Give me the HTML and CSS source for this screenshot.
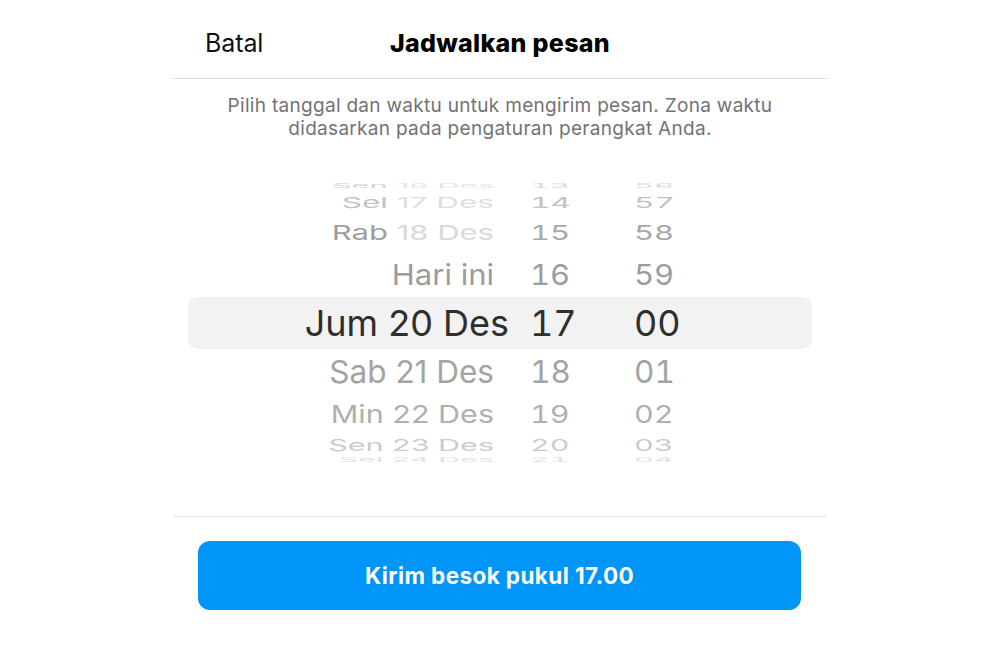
FILE: index.html
```html
<!DOCTYPE html>
<html lang="id">
<head>
<meta charset="utf-8">
<title>Jadwalkan pesan</title>
<link rel="stylesheet" href="styles.css">
</head>
<body>
<div class="sheet">
  <header class="header">
    <span class="cancel">Batal</span>
    <h1 class="title">Jadwalkan pesan</h1>
    <span></span>
  </header>
  <p class="desc">Pilih tanggal dan waktu untuk mengirim pesan. Zona waktu<br>didasarkan pada pengaturan perangkat Anda.</p>
  <div class="picker">
    <div class="row r4"><span class="d"><span class="dd">Sen</span> <span class="df">16 Des</span></span><span class="h">13</span><span class="m">56</span></div>
    <div class="row r3"><span class="d"><span class="dd">Sel</span> <span class="df">17 Des</span></span><span class="h">14</span><span class="m">57</span></div>
    <div class="row r2"><span class="d"><span class="dd">Rab</span> <span class="df">18 Des</span></span><span class="h">15</span><span class="m">58</span></div>
    <div class="row r1"><span class="d">Hari ini</span><span class="h">16</span><span class="m">59</span></div>
    <div class="row sel"><span class="d">Jum 20 Des</span><span class="h">17</span><span class="m">00</span></div>
    <div class="row b1"><span class="d">Sab 21 Des</span><span class="h">18</span><span class="m">01</span></div>
    <div class="row b2"><span class="d">Min 22 Des</span><span class="h">19</span><span class="m">02</span></div>
    <div class="row b3"><span class="d">Sen 23 Des</span><span class="h">20</span><span class="m">03</span></div>
    <div class="row b4"><span class="d">Sel 24 Des</span><span class="h">21</span><span class="m">04</span></div>
  </div>
  <div class="footer">
    <button class="send">Kirim besok pukul 17.00</button>
  </div>
</div>
</body>
</html>
```
FILE: styles.css
```css
* { box-sizing: border-box; }
html, body { margin: 0; padding: 0; background: #fff; }
body { font-family: Inter, "Noto Sans", sans-serif; color: #000; }

.sheet { width: 654px; margin: 0 auto; }

.header {
  height: 79px;
  display: grid;
  grid-template-columns: 1fr auto 1fr;
  align-items: center;
  padding: 0 32px;
  border-bottom: 1px solid #dcdcdc;
}
.cancel { font-size: 25px; color: #111; padding-top: 8px; letter-spacing: -0.1px; }
.title { margin: 0; font-size: 25px; font-weight: 800; padding-top: 8px; letter-spacing: 0.3px; }

.desc {
  margin: 15px 0 0;
  text-align: center;
  font-size: 19px;
  line-height: 23px;
  letter-spacing: 0.3px;
  color: #737373;
}

.picker {
  margin-top: 40px;
  height: 288px;
}

.row {
  display: grid;
  grid-template-columns: 357px 104px 1fr;
  grid-template-rows: minmax(0, 1fr);
  align-items: center;
  white-space: nowrap;
}
.row > span { display: block; }
.row .d { text-align: right; padding-right: 36px; }
.row .h, .row .m { font-variant-numeric: tabular-nums; }

.r4 { height: 12px; font-size: 31px; color: #dadada; }
.r3 { height: 20px; font-size: 31.5px; color: #c2c2c2; }
.r2 { height: 40px; font-size: 31px; color: #a8a8a8; }
.r1 { height: 45px; font-size: 31px; color: #9c9c9c; }
.sel {
  height: 52px;
  margin: 0 15px;
  border-radius: 10px;
  background: #f2f2f2;
  grid-template-columns: 342px 104px 1fr;
  font-size: 36px;
  color: #2e2e2e;
}
.sel .d { padding-right: 21px; }
.b1 { height: 45px; font-size: 31.5px; color: #a3a3a3; }
.b2 { height: 38px; font-size: 30.5px; color: #b0b0b0; }
.b3 { height: 22px; font-size: 30.5px; color: #cbcbcb; }
.b4 { height: 14px; font-size: 30.5px; color: #e2e2e2; }

.r4 > span { transform: translateY(-1px) scaleY(0.18); }
.r3 > span { transform: scaleY(0.48); }
.r2 > span { transform: scaleY(0.66); }
.r1 > span { transform: scaleY(0.93); }
.b1 > span { transform: scaleY(1); }
.b2 > span { transform: scaleY(0.8); }
.b3 > span { transform: translateY(1px) scaleY(0.54); }
.b4 > span { transform: translateY(-2px) scaleY(0.2); }

.r3 .df { color: #dedede; }
.r2 .df { color: #d9d9d9; }
.r2 .dd { color: #9e9e9e; }
.r4 .dd { color: #d2d2d2; }
.r4 .df { color: #e6e6e6; }

.footer {
  margin-top: 48px;
  border-top: 1px solid #e6e6e6;
  padding: 24px 25px 0;
}
.send {
  display: block;
  width: 603px;
  height: 69px;
  border: 0;
  border-radius: 12px;
  background: #0095f6;
  color: #fff;
  font-family: Inter, "Noto Sans", sans-serif;
  font-size: 22.5px;
  font-weight: 700;
  letter-spacing: 0.4px;
}
```
